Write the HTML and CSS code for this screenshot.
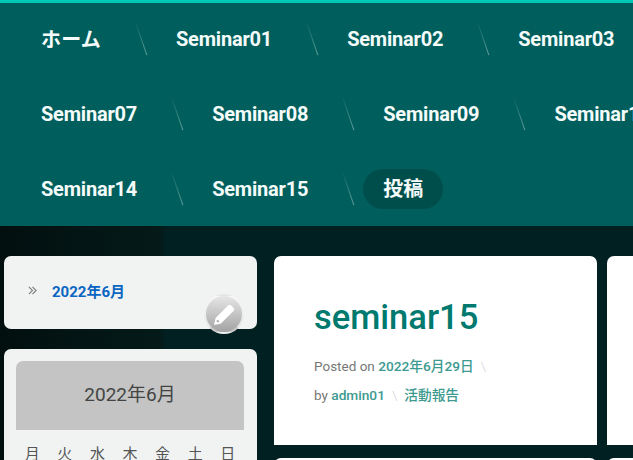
FILE: index.html
```html
<!DOCTYPE html>
<html lang="ja">
<head>
    <meta charset="UTF-8">
    <meta name="viewport" content="width=device-width, initial-scale=1.0">
    <title>seminar15</title>
    <link rel="stylesheet" href="styles.css">
</head>
<body>
    <nav class="site-nav">
        <ul class="nav-list">
            <li class="nav-item nav-home"><a href="#">ホーム</a></li>
            <li class="nav-item"><a href="#">Seminar01</a></li>
            <li class="nav-item"><a href="#">Seminar02</a></li>
            <li class="nav-item"><a href="#">Seminar03</a></li>
            <li class="nav-item"><a href="#">Seminar04</a></li>
            <li class="nav-item"><a href="#">Seminar05</a></li>
            <li class="nav-item"><a href="#">Seminar06</a></li>
            <li class="nav-item"><a href="#">Seminar07</a></li>
            <li class="nav-item"><a href="#">Seminar08</a></li>
            <li class="nav-item"><a href="#">Seminar09</a></li>
            <li class="nav-item"><a href="#">Seminar10</a></li>
            <li class="nav-item"><a href="#">Seminar11</a></li>
            <li class="nav-item"><a href="#">Seminar12</a></li>
            <li class="nav-item"><a href="#">Seminar13</a></li>
            <li class="nav-item"><a href="#">Seminar14</a></li>
            <li class="nav-item"><a href="#">Seminar15</a></li>
            <li class="nav-item nav-post"><a href="#">投稿</a></li>
        </ul>
    </nav>

    <div class="page">
        <aside class="sidebar">
            <section class="widget archive">
                <svg class="archive-arrows" viewBox="0 0 10 10" width="9" height="9">
                    <path d="M1 1l4 4-4 4M5 1l4 4-4 4" fill="none" stroke="#808080" stroke-width="1.3"/>
                </svg>
                <a href="#">2022年6月</a>
                <button class="edit-btn" aria-label="編集">
                    <svg viewBox="0 0 24 24" width="25" height="25">
                        <path d="M2 22l1.4-6.6L15.6 3.2a1.8 1.8 0 0 1 2.6 0l2.6 2.6a1.8 1.8 0 0 1 0 2.6L8.6 20.6z" fill="#fff"/>
                        <path d="M4.8 17.6l1.6 1.6" stroke="#aaa" stroke-width="1.8"/>
                    </svg>
                </button>
            </section>
            <section class="widget calendar">
                <div class="cal-caption">2022年6月</div>
                <div class="cal-head">
                    <span>月</span><span>火</span><span>水</span><span>木</span><span>金</span><span>土</span><span>日</span>
                </div>
            </section>
        </aside>

        <main class="posts">
            <article class="post">
                <h2><a href="#">seminar15</a></h2>
                <div class="meta">
                    <span class="meta-part">Posted on <a href="#">2022年6月29日</a></span>
                </div>
                <div class="meta">
                    <span class="meta-part">by <a href="#">admin01</a></span><a href="#" class="meta-cat">活動報告</a>
                </div>
            </article>
            <article class="post next-col"></article>
            <article class="post"></article>
            <article class="post next-col"></article>
        </main>
    </div>
</body>
</html>
```

FILE: styles.css
```css
html, body {
    margin: 0;
    height: 460px;
    overflow: hidden;
}
body {
    font-family: Roboto, "Noto Sans CJK JP", sans-serif;
    background: linear-gradient(90deg, #020f0f 0, #031413 60px, #041a18 160px, #012021 166px, #012021 100%);
}
a {
    text-decoration: none;
}

/* Nav runs wider than the window, same as the original */
.site-nav {
    width: 1280px;
    height: 223px;
    border-top: 3px solid #00c9b7;
    background-color: #005f5c;
}
.nav-list {
    display: flex;
    flex-wrap: wrap;
    align-items: center;
    margin: 0;
    padding: 0 0 0 41px;
    list-style: none;
}
.nav-item {
    position: relative;
    display: flex;
    align-items: center;
    height: 71px;
    padding-bottom: 4px;
    margin-right: 75px;
}
.nav-item a {
    color: #f4fbfa;
    font-size: 20px;
    font-weight: 700;
    letter-spacing: -0.2px;
}
.nav-home a {
    letter-spacing: 0.2px;
}
.nav-item::after {
    content: "";
    position: absolute;
    top: 20px;
    right: -41px;
    width: 1px;
    height: 33px;
    background: linear-gradient(180deg, rgba(255,255,255,0.03), rgba(255,255,255,0.4));
    transform: rotate(-19deg);
}
.nav-post {
    margin-left: -20px;
}
.nav-post::after {
    display: none;
}
.nav-post a {
    padding: 9px 20px;
    border-radius: 20px;
    background-color: #004e4b;
    line-height: 22px;
    letter-spacing: 0;
}

.page {
    display: flex;
    align-items: flex-start;
    gap: 17px;
    width: 1000px;
    padding: 30px 0 0 4px;
}
.sidebar {
    display: flex;
    flex-direction: column;
    gap: 20px;
    width: 253px;
    flex: none;
}
.widget {
    position: relative;
    border-radius: 7px;
    background-color: #f1f3f3;
}
.archive {
    display: flex;
    align-items: center;
    gap: 15px;
    height: 73px;
    padding: 0 0 4px 24px;
    box-sizing: border-box;
}
.archive-arrows {
    flex: none;
}
.archive a {
    color: #0a66c2;
    font-size: 15px;
    font-weight: 700;
}
.edit-btn {
    position: absolute;
    right: 13px;
    bottom: -5px;
    width: 40px;
    height: 40px;
    padding: 0;
    display: flex;
    align-items: center;
    justify-content: center;
    border: 2px solid rgba(255,255,255,0.7);
    border-bottom-color: rgba(255,255,255,0.4);
    border-radius: 50%;
    background: linear-gradient(180deg, #e6e6e6, #a3a3a3);
    box-sizing: border-box;
}
.calendar {
    padding: 12px 13px 0 12px;
    height: 200px;
    box-sizing: border-box;
}
.cal-caption {
    height: 69px;
    line-height: 67px;
    border-radius: 7px 7px 0 0;
    background-color: #c3c4c3;
    color: #444;
    font-size: 19px;
    text-align: center;
}
.cal-head {
    display: grid;
    grid-template-columns: repeat(7, 1fr);
    padding-top: 12px;
    color: #555;
    font-size: 15px;
    text-align: center;
}

.posts {
    display: grid;
    grid-template-columns: 323px 323px;
    gap: 13px 10px;
    flex: none;
}
.post {
    height: 189px;
    padding: 40px;
    box-sizing: border-box;
    border-radius: 7px 7px 0 0;
    background-color: #fff;
}
.post h2 {
    margin: 1px 0 14px;
    font-size: 34.5px;
    font-weight: 500;
    line-height: 41px;
}
.post h2 a {
    color: #00796f;
}
.meta {
    height: 29px;
    color: #777;
    font-size: 13.5px;
    line-height: 29px;
}
.meta a {
    color: #3d9a90;
    font-size: 13.7px;
    font-weight: 500;
}
.meta-part::after {
    content: "\\";
    margin: 0 7px;
    color: #d4d4d4;
    font-weight: 300;
}
```
